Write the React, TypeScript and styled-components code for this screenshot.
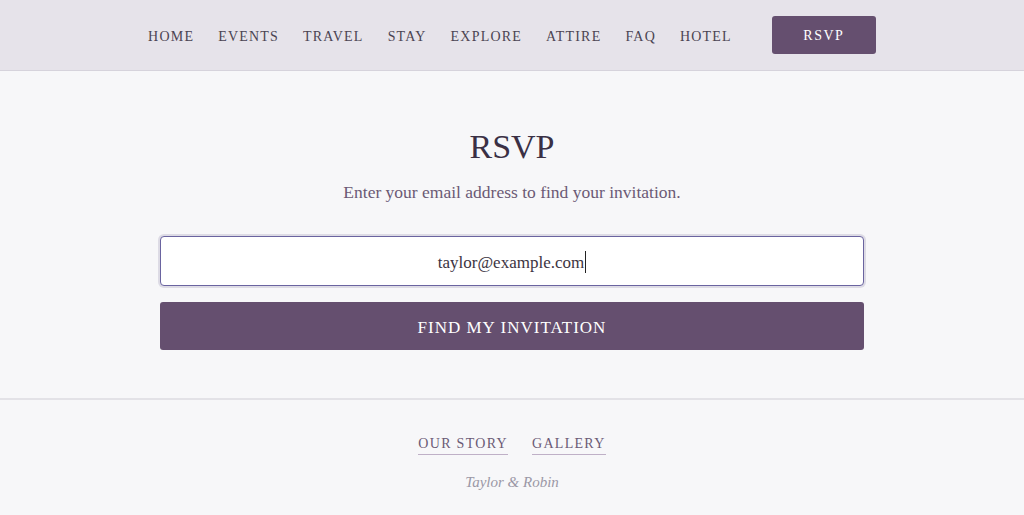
import React from "react";
import styled, { createGlobalStyle } from "styled-components";

const GlobalStyle = createGlobalStyle`
  html, body {
    margin: 0;
    padding: 0;
    background: #f7f7f9;
    font-family: "Liberation Serif", "DejaVu Serif", serif;
  }
`;

const Page = styled.div`
  display: flex;
  flex-direction: column;
  min-height: 515px;
  background: #f7f7f9;
`;

const Header = styled.header`
  display: flex;
  align-items: center;
  justify-content: center;
  height: 70px;
  background: #e6e3ea;
  border-bottom: 1px solid #d6d3dc;
`;

const Nav = styled.nav`
  display: flex;
  align-items: center;
  gap: 24px;
`;

const NavLink = styled.a`
  padding-top: 3px;
  font-size: 14px;
  letter-spacing: 1.2px;
  color: #4b4452;
  text-decoration: none;
`;

const NavButton = styled.a`
  display: flex;
  align-items: center;
  justify-content: center;
  box-sizing: border-box;
  width: 104px;
  height: 38px;
  padding-top: 2px;
  margin-left: 16px;
  background: #654f6f;
  color: #fff;
  border-radius: 3px;
  font-size: 14px;
  letter-spacing: 1.5px;
  text-decoration: none;
`;

const Main = styled.main`
  display: flex;
  flex-direction: column;
  align-items: center;
  padding: 54px 0 48px;
`;

const Title = styled.h1`
  margin: 0;
  font-size: 34px;
  font-weight: 400;
  color: #3a3045;
  line-height: 44px;
`;

const Subtitle = styled.p`
  margin: 11px 0 0;
  font-size: 17.5px;
  color: #6b5a75;
  line-height: 24px;
`;

const Form = styled.form`
  display: flex;
  flex-direction: column;
  gap: 16px;
  width: 704px;
  margin-top: 32px;
`;

const Field = styled.div`
  display: flex;
  align-items: center;
  justify-content: center;
  box-sizing: border-box;
  height: 50px;
  padding-top: 3px;
  background: #fff;
  border: 1px solid #6a64a0;
  border-radius: 4px;
  box-shadow: 0 0 0 2px #dddbe5;
  font-size: 17px;
  color: #3c3442;
`;

const Caret = styled.span`
  display: inline-block;
  width: 1px;
  height: 22px;
  margin-left: 1px;
  margin-bottom: 2px;
  background: #222;
`;

const Submit = styled.button`
  height: 48px;
  padding-top: 4px;
  border: none;
  border-radius: 3px;
  background: #654f6f;
  color: #fff;
  font-family: inherit;
  font-size: 17px;
  letter-spacing: 1px;
  cursor: pointer;
`;

const Footer = styled.footer`
  display: flex;
  flex-direction: column;
  align-items: center;
  border-top: 2px solid #e3e2e7;
  padding-top: 36px;
`;

const FooterLinks = styled.div`
  display: flex;
  gap: 24px;
`;

const FooterLink = styled.a`
  font-size: 14px;
  letter-spacing: 1.3px;
  color: #6b5a75;
  text-decoration: none;
  padding-bottom: 2px;
  border-bottom: 1px solid #bfb0c7;
`;

const Couple = styled.p`
  margin: 19px 0 0;
  font-size: 15px;
  font-style: italic;
  color: #9b98a6;
`;

const navItems = ["HOME", "EVENTS", "TRAVEL", "STAY", "EXPLORE", "ATTIRE", "FAQ", "HOTEL"];

export default function App() {
  return (
    <Page>
      <GlobalStyle />
      <Header>
        <Nav>
          {navItems.map((item) => (
            <NavLink key={item} href="#">
              {item}
            </NavLink>
          ))}
          <NavButton href="#">RSVP</NavButton>
        </Nav>
      </Header>
      <Main>
        <Title>RSVP</Title>
        <Subtitle>Enter your email address to find your invitation.</Subtitle>
        <Form onSubmit={(e) => e.preventDefault()}>
          <Field>
            taylor@example.com
            <Caret />
          </Field>
          <Submit type="submit">FIND MY INVITATION</Submit>
        </Form>
      </Main>
      <Footer>
        <FooterLinks>
          <FooterLink href="#">OUR STORY</FooterLink>
          <FooterLink href="#">GALLERY</FooterLink>
        </FooterLinks>
        <Couple>Taylor &amp; Robin</Couple>
      </Footer>
    </Page>
  );
}
